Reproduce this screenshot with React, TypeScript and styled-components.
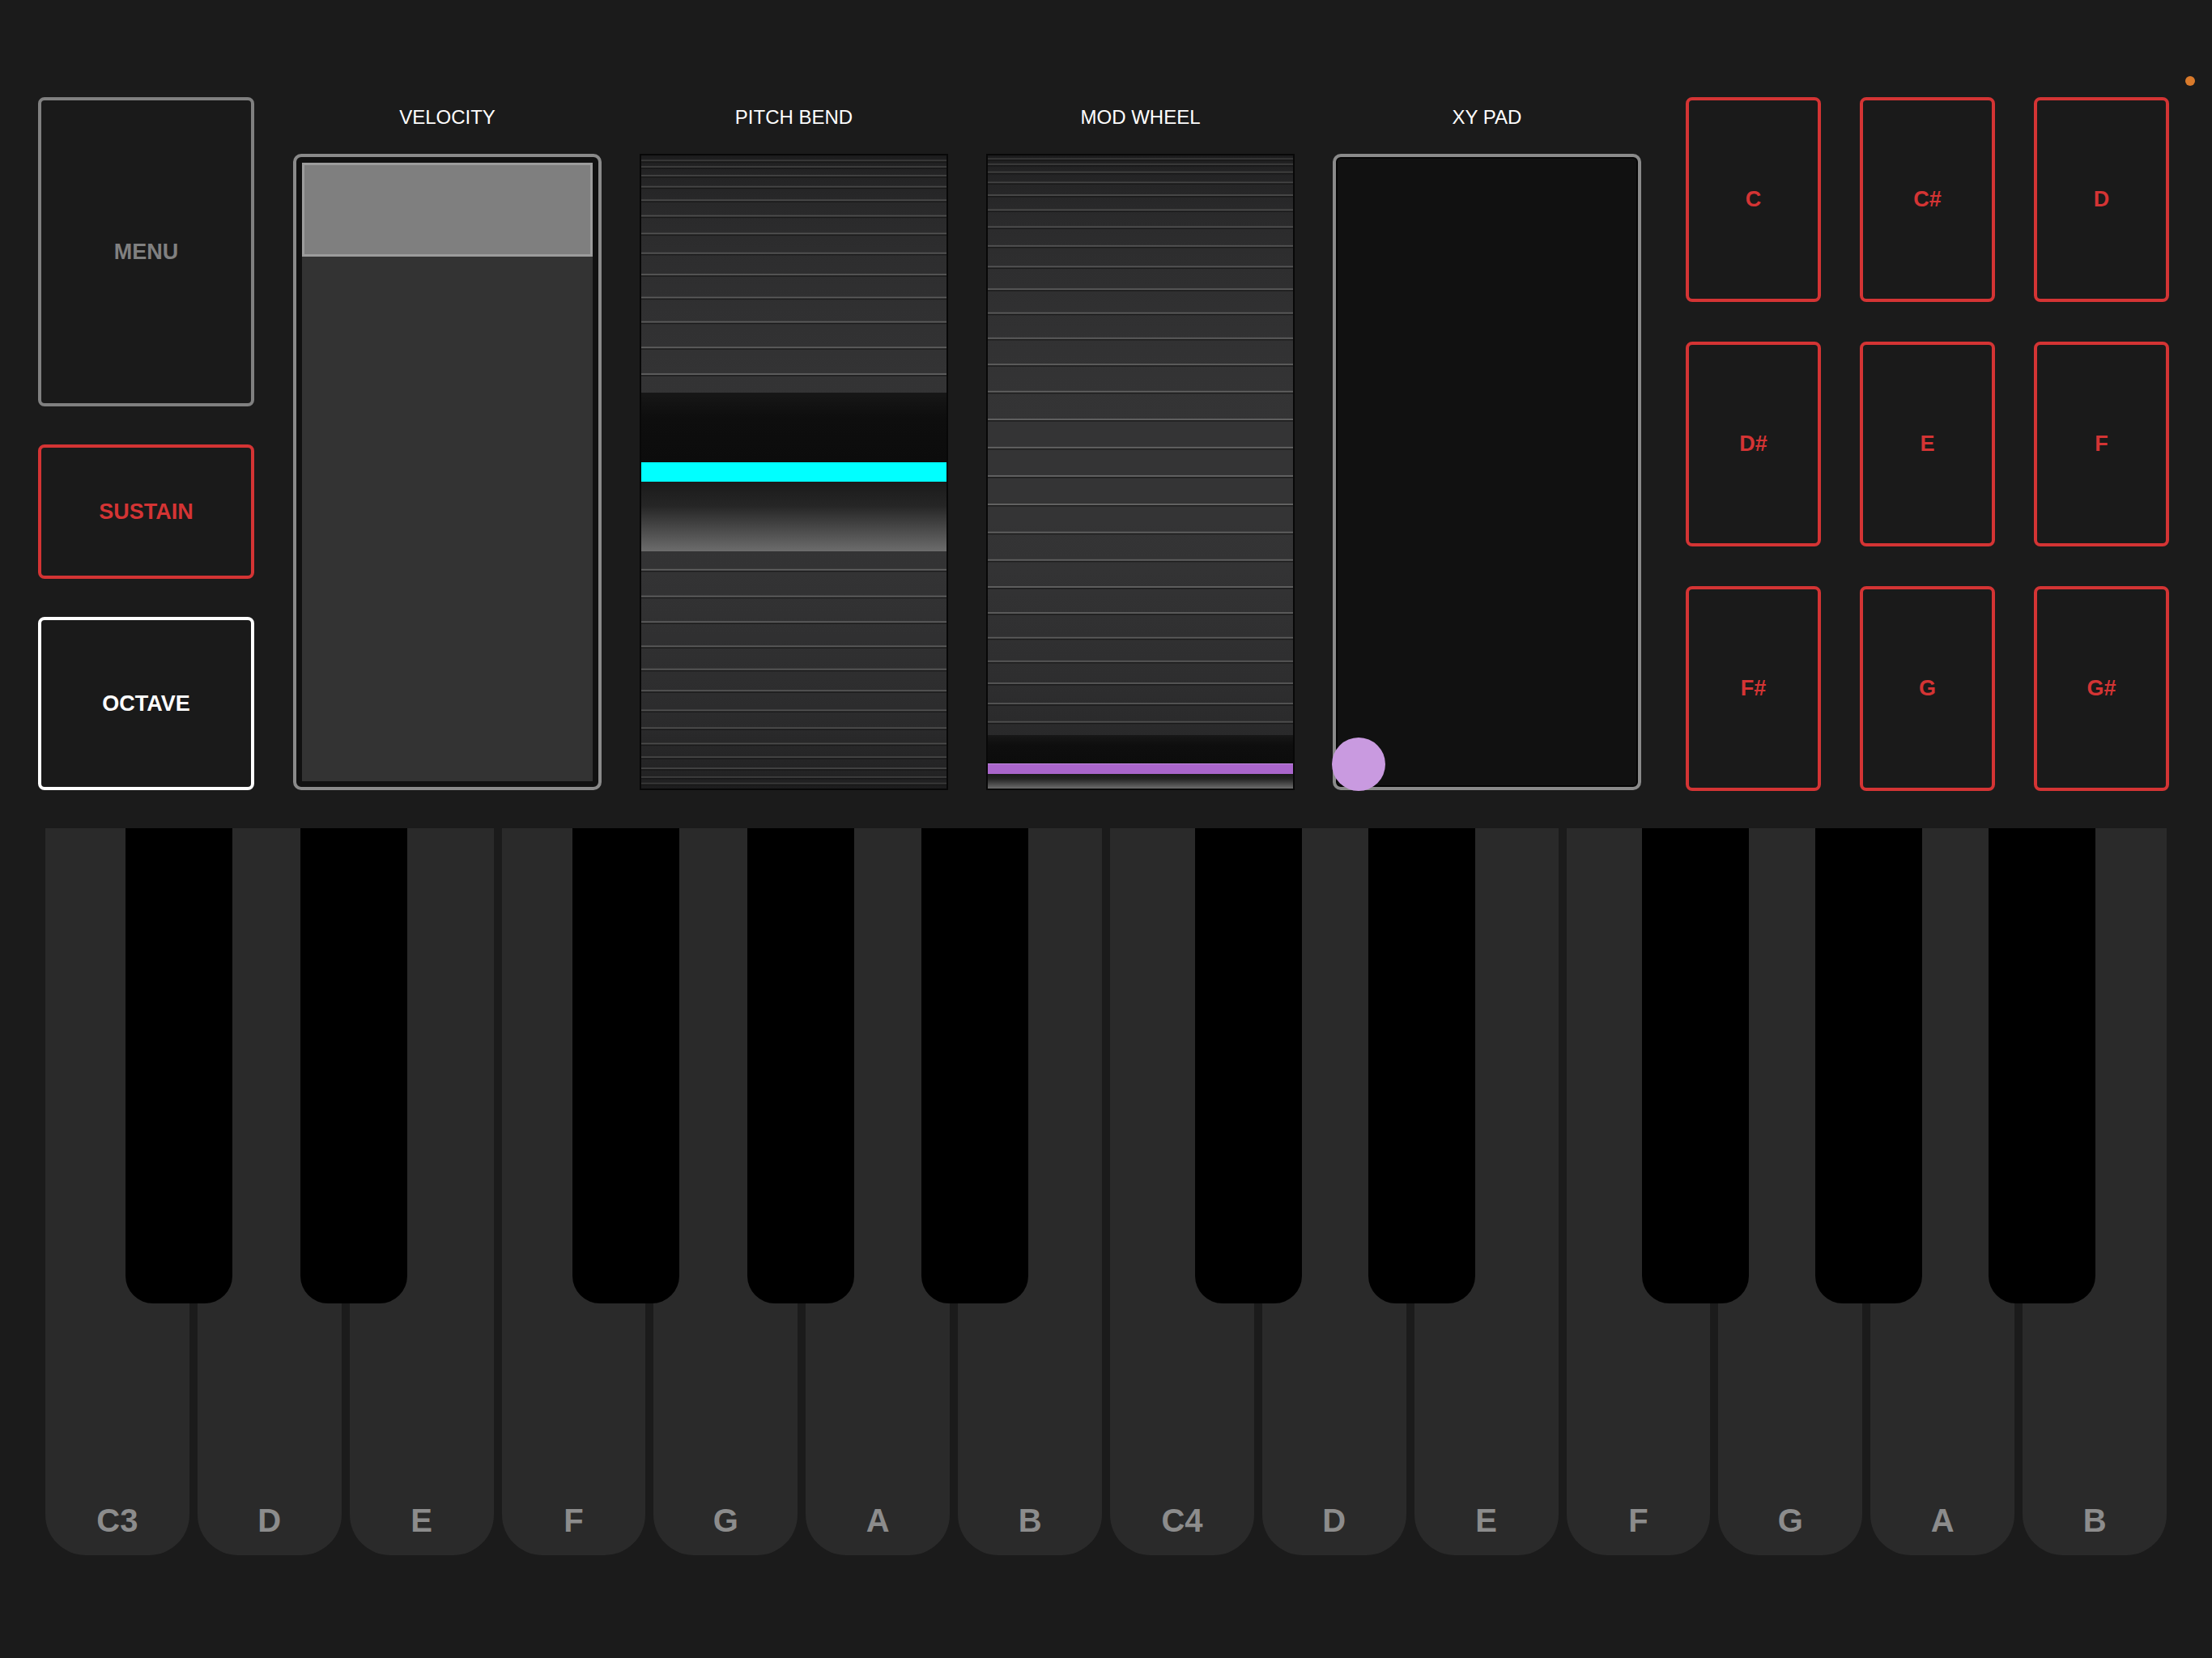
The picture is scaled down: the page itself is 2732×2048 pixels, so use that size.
import React from "react";
import { styled, createGlobalStyle } from "styled-components";

const WHEEL_W = 377;
const WHEEL_H = 782;
const STEP = 180 / 35;

type Segment = { y: number; h: number; fill: string };

type WheelProps = {
  id: string;
  phase: number;
  bandFrom: number;
  bandTo: number;
  segments: Segment[];
  defs?: React.ReactNode;
};

const Wheel = ({ id, phase, bandFrom, bandTo, segments, defs }: WheelProps) => {
  const cy = WHEEL_H / 2;
  const r = WHEEL_H / 2;
  const stops = [];
  for (let i = 0; i <= 20; i++) {
    const a = ((-90 + 9 * i) * Math.PI) / 180;
    const v = Math.round(27 + 25 * Math.cos(a));
    stops.push(
      <stop
        key={i}
        offset={(1 + Math.sin(a)) / 2}
        stopColor={`rgb(${v},${v},${v + 1})`}
      />
    );
  }
  const lines = [];
  for (let k = 0; k < 37; k++) {
    const deg = -90 + phase + STEP * k;
    const a = (deg * Math.PI) / 180;
    const y = cy + r * Math.sin(a);
    if (y < 2 || y > WHEEL_H - 2) continue;
    if (y > bandFrom - 2 && y < bandTo + 2) continue;
    const v = Math.round(48 + 50 * Math.cos(a));
    lines.push(
      <g key={k}>
        <rect x={0} y={y - 1} width={WHEEL_W} height={2} fill={`rgb(${v},${v},${v})`} />
        <rect x={0} y={y + 1} width={WHEEL_W} height={1.5} fill="#141414" opacity={0.7} />
      </g>
    );
  }
  return (
    <svg width={WHEEL_W} height={WHEEL_H} viewBox={`0 0 ${WHEEL_W} ${WHEEL_H}`}>
      <defs>
        <linearGradient id={`${id}-bg`} x1="0" y1="0" x2="0" y2="1">
          {stops}
        </linearGradient>
        {defs}
      </defs>
      <rect x={0} y={0} width={WHEEL_W} height={WHEEL_H} fill={`url(#${id}-bg)`} />
      {lines}
      {segments.map((s, i) => (
        <rect key={i} x={0} y={s.y} width={WHEEL_W} height={s.h} fill={s.fill} />
      ))}
    </svg>
  );
};

const shadeDefs = (id: string) => (
  <>
    <linearGradient id={`${id}-dark`} x1="0" y1="0" x2="0" y2="1">
      <stop offset="0" stopColor="#171717" />
      <stop offset="0.35" stopColor="#0e0e0e" />
      <stop offset="1" stopColor="#0c0c0c" />
    </linearGradient>
    <linearGradient id={`${id}-light`} x1="0" y1="0" x2="0" y2="1">
      <stop offset="0" stopColor="#1a1a1a" />
      <stop offset="0.35" stopColor="#262626" />
      <stop offset="1" stopColor="#6c6c6c" />
    </linearGradient>
  </>
);

const WHITE_KEYS = ["C3", "D", "E", "F", "G", "A", "B", "C4", "D", "E", "F", "G", "A", "B"];
const BLACK_KEYS = [99, 315, 651, 867, 1082, 1420, 1634, 1972, 2186, 2400];
const PADS = ["C", "C#", "D", "D#", "E", "F", "F#", "G", "G#"];

const App = () => {
  return (
    <>
      <GlobalStyle />
      <StPage>
        <StStatusDot />
        <StTopRow>
          <StLeftColumn>
            <StSideButton $tone="#808080" $h={382}>MENU</StSideButton>
            <StSideButton $tone="#d43434" $h={166}>SUSTAIN</StSideButton>
            <StSideButton $tone="#ffffff" $h={214}>OCTAVE</StSideButton>
          </StLeftColumn>

          <StSliders>
            <StSliderColumn>
              <StLabel>VELOCITY</StLabel>
              <StVelocityBox>
                <StVelocityHandle />
                <StVelocityFill />
              </StVelocityBox>
            </StSliderColumn>

            <StSliderColumn>
              <StLabel>PITCH BEND</StLabel>
              <StWheelBox>
                <Wheel
                  id="pb"
                  phase={0}
                  bandFrom={293}
                  bandTo={489}
                  defs={shadeDefs("pb")}
                  segments={[
                    { y: 293, h: 86, fill: "url(#pb-dark)" },
                    { y: 379, h: 24, fill: "#00ffff" },
                    { y: 403, h: 86, fill: "url(#pb-light)" },
                  ]}
                />
              </StWheelBox>
            </StSliderColumn>

            <StSliderColumn>
              <StLabel>MOD WHEEL</StLabel>
              <StWheelBox>
                <Wheel
                  id="mw"
                  phase={3.3}
                  bandFrom={716}
                  bandTo={782}
                  defs={shadeDefs("mw")}
                  segments={[
                    { y: 716, h: 35, fill: "url(#mw-dark)" },
                    { y: 751, h: 13, fill: "#aa66cc" },
                    { y: 751, h: 1, fill: "#c08ae0" },
                    { y: 764, h: 18, fill: "url(#mw-light)" },
                  ]}
                />
              </StWheelBox>
            </StSliderColumn>

            <StSliderColumn>
              <StLabel>XY PAD</StLabel>
              <StXyPad>
                <StPuck />
              </StXyPad>
            </StSliderColumn>
          </StSliders>

          <StPadGrid>
            {PADS.map((p) => (
              <StPad key={p}>{p}</StPad>
            ))}
          </StPadGrid>
        </StTopRow>

        <StKeyboard>
          {WHITE_KEYS.map((k, i) => (
            <StWhiteKey key={i}>{k}</StWhiteKey>
          ))}
          {BLACK_KEYS.map((left) => (
            <StBlackKey key={left} style={{ left }} />
          ))}
        </StKeyboard>
      </StPage>
    </>
  );
};

const GlobalStyle = createGlobalStyle`
  * {
    box-sizing: border-box;
  }
  body {
    margin: 0;
    background-color: #1b1b1b;
    font-family: "Liberation Sans", Arial, sans-serif;
    overflow: hidden;
  }
`;

const StPage = styled.div`
  position: relative;
  width: 2732px;
  height: 2048px;
  padding-top: 120px;
  background-color: #1b1b1b;
`;

const StStatusDot = styled.div`
  position: absolute;
  top: 94px;
  left: 2699px;
  width: 12px;
  height: 12px;
  border-radius: 50%;
  background-color: #d97a2b;
`;

const StTopRow = styled.div`
  display: flex;
  height: 856px;
  margin-left: 47px;
`;

const StLeftColumn = styled.div`
  display: flex;
  flex-direction: column;
  gap: 47px;
  width: 267px;
`;

const StSideButton = styled.div<{ $tone: string; $h: number }>`
  display: flex;
  align-items: center;
  justify-content: center;
  height: ${({ $h }) => $h}px;
  border: 4px solid ${({ $tone }) => $tone};
  border-radius: 8px;
  background-color: #1a1a1a;
  color: ${({ $tone }) => $tone};
  font-size: 27px;
  font-weight: bold;
`;

const StSliders = styled.div`
  display: flex;
  gap: 47px;
  margin-left: 48px;
`;

const StSliderColumn = styled.div`
  display: flex;
  flex-direction: column;
  width: 381px;
`;

const StLabel = styled.div`
  height: 70px;
  padding-top: 13px;
  color: #ffffff;
  font-size: 24px;
  line-height: 24px;
  text-align: center;
`;

const StVelocityBox = styled.div`
  display: flex;
  flex-direction: column;
  height: 786px;
  padding: 7px;
  border: 4px solid #8a8a8a;
  border-radius: 10px;
  background-color: #111111;
`;

const StVelocityHandle = styled.div`
  height: 116px;
  border: 3px solid #9c9c9c;
  background-color: #7f7f7f;
`;

const StVelocityFill = styled.div`
  flex: 1;
  background-color: #333333;
`;

const StWheelBox = styled.div`
  height: 786px;
  border: 2px solid #080808;
  background-color: #1c1c1c;
  overflow: hidden;
  > svg {
    display: block;
  }
`;

const StXyPad = styled.div`
  position: relative;
  height: 786px;
  border: 4px solid #8a8a8a;
  border-radius: 10px;
  background-color: #111111;
  box-shadow: inset 0 0 0 2px #050505;
`;

const StPuck = styled.div`
  position: absolute;
  left: -5px;
  bottom: -5px;
  width: 66px;
  height: 66px;
  border-radius: 50%;
  background-color: #c99ae0;
`;

const StPadGrid = styled.div`
  display: grid;
  grid-template-columns: repeat(3, 167px);
  grid-template-rows: repeat(3, 253px);
  column-gap: 48px;
  row-gap: 49px;
  margin-left: 55px;
`;

const StPad = styled.div`
  display: flex;
  align-items: center;
  justify-content: center;
  border: 4px solid #d43434;
  border-radius: 8px;
  background-color: #1a1a1a;
  color: #d43434;
  font-size: 27px;
  font-weight: bold;
`;

const StKeyboard = styled.div`
  position: relative;
  display: flex;
  gap: 10px;
  width: 2620px;
  height: 898px;
  margin-top: 47px;
  margin-left: 56px;
`;

const StWhiteKey = styled.div`
  display: flex;
  flex: 1;
  align-items: flex-end;
  justify-content: center;
  padding-bottom: 23px;
  border-radius: 0 0 50px 50px;
  background-color: #2a2a2a;
  color: #8c8c8c;
  font-size: 40px;
  line-height: 40px;
  font-weight: bold;
`;

const StBlackKey = styled.div`
  position: absolute;
  top: 0;
  width: 132px;
  height: 587px;
  border-radius: 0 0 34px 34px;
  background-color: #000000;
`;

export default App;
